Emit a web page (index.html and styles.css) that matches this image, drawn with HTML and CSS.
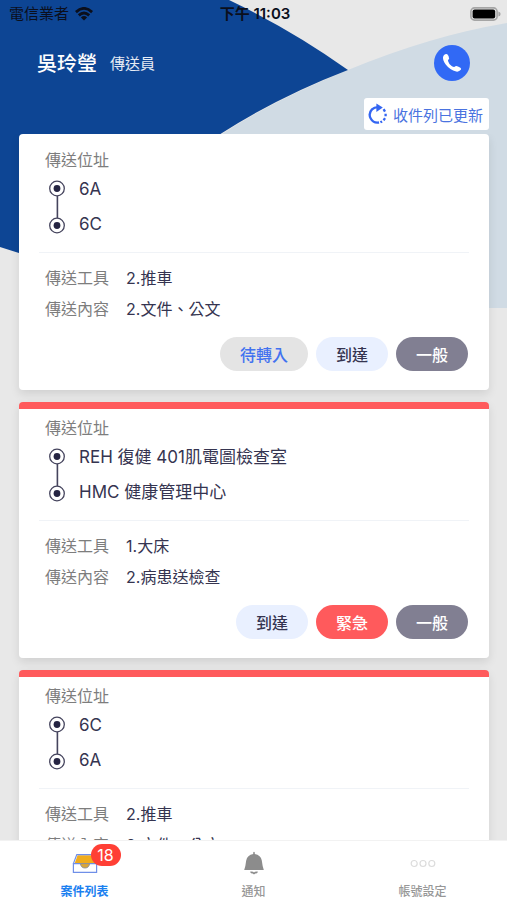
FILE: index.html
```html
<!DOCTYPE html>
<html lang="zh-Hant">
<head>
<meta charset="utf-8">
<meta name="viewport" content="width=device-width, initial-scale=1">
<title>案件列表</title>
<link rel="stylesheet" href="styles.css">
</head>
<body>
<svg class="backdrop" viewBox="0 0 507 308" preserveAspectRatio="none" aria-hidden="true">
  <path fill="#d0dbe4" d="M507 23Q430 36 348 70Q270 102 222 134L120 308H507Z"/>
  <path fill="#0d4594" d="M0 0H229Q292 30 348 70Q280 96 222 133Q130 190 60 266L0 247Z"/>
</svg>

<div class="app">
  <div class="status">
    <div class="carrier">
      <span>電信業者</span>
      <svg width="18" height="14" viewBox="0 0 18 14" fill="none" stroke="#0b0f1c" stroke-width="2.8">
        <path d="M.9 5.1Q9-2.3 17.1 5.1M3.8 8.4Q9 3.6 14.2 8.4"/>
        <path fill="#0b0f1c" stroke="none" d="M5.9 10.4Q9 7.8 12.1 10.4L9 13.6Z"/>
      </svg>
    </div>
    <div class="time">下午 11:03</div>
    <svg class="battery" width="31" height="14" viewBox="0 0 31 14">
      <rect x=".9" y=".9" width="26.2" height="12.2" rx="3.6" fill="#e8e8e8" stroke="#a5a5a5" stroke-width="1.6"/>
      <rect x="2.6" y="2.4" width="22.6" height="9.2" rx="2" fill="#000"/>
      <path fill="#a5a5a5" d="M28.4 4.5Q30.6 5 30.6 7T28.4 9.5Z"/>
    </svg>
  </div>

  <header class="profile">
    <h1>吳玲瑩</h1>
    <span class="role">傳送員</span>
    <button class="call" type="button" aria-label="撥打電話">
      <svg width="20" height="20" viewBox="0 0 22 22" fill="#fff">
        <path d="M2.6 1.9Q4.2.6 5.8 1.5Q8.3 4 7.9 6.4Q6.7 7.5 6.5 8.5Q7.4 12 10.6 14.2Q12.1 15.3 13.4 15.4Q14.4 15.2 15.3 14.4Q16.8 14.1 20.2 16.1Q21.6 17.2 20.7 18.5Q18.7 21 15.6 20.4Q8.7 18.7 4.3 13Q.8 8.2 1.1 4.6Q1.5 2.9 2.6 1.9Z"/>
      </svg>
    </button>
  </header>

  <div class="notice-row">
    <button class="notice" type="button">
      <svg width="20" height="22" viewBox="0 0 20 22" fill="none" stroke="#3466f2" stroke-width="2.3">
        <path d="M11 19.5A7.8 7.8 0 0 1 4 6.4Q6.2 4.1 10 4.1"/>
        <path fill="#3466f2" stroke="none" d="M8.4.4L14.8 4.6L8.4 9.1Z"/>
        <path d="M15.6 6.2L17 8.6M17.6 10.8V13.2M17 15.2L15.6 17.3M14.1 18.4L12.4 19.3"/>
      </svg>
      <span>收件列已更新</span>
    </button>
  </div>

  <main class="cases">
    <article class="card">
      <h2>傳送位址</h2>
      <div class="route">
        <svg width="16" height="54" viewBox="0 0 16 54" fill="none" stroke="#45445d"><circle cx="8" cy="8.5" r="7.3" stroke-width="1.3"/><circle cx="8" cy="45.5" r="7.3" stroke-width="1.3"/><path stroke-width="1.6" d="M8.4 16V38"/><g fill="#252442" stroke="none"><circle cx="8" cy="8.5" r="3.4"/><circle cx="8" cy="45.5" r="3.4"/></g></svg>
        <ol><li>6A</li><li>6C</li></ol>
      </div>
      <dl>
        <div><dt>傳送工具</dt><dd>2.推車</dd></div>
        <div><dt>傳送內容</dt><dd>2.文件、公文</dd></div>
      </dl>
      <div class="actions">
        <button class="pill waiting" type="button">待轉入</button>
        <button class="pill arrive" type="button">到達</button>
        <button class="pill normal" type="button">一般</button>
      </div>
    </article>

    <article class="card urgent-card">
      <h2>傳送位址</h2>
      <div class="route">
        <svg width="16" height="54" viewBox="0 0 16 54" fill="none" stroke="#45445d"><circle cx="8" cy="8.5" r="7.3" stroke-width="1.3"/><circle cx="8" cy="45.5" r="7.3" stroke-width="1.3"/><path stroke-width="1.6" d="M8.4 16V38"/><g fill="#252442" stroke="none"><circle cx="8" cy="8.5" r="3.4"/><circle cx="8" cy="45.5" r="3.4"/></g></svg>
        <ol><li>REH 復健 401肌電圖檢查室</li><li>HMC 健康管理中心</li></ol>
      </div>
      <dl>
        <div><dt>傳送工具</dt><dd>1.大床</dd></div>
        <div><dt>傳送內容</dt><dd>2.病患送檢查</dd></div>
      </dl>
      <div class="actions">
        <button class="pill arrive" type="button">到達</button>
        <button class="pill urgent" type="button">緊急</button>
        <button class="pill normal" type="button">一般</button>
      </div>
    </article>

    <article class="card urgent-card">
      <h2>傳送位址</h2>
      <div class="route">
        <svg width="16" height="54" viewBox="0 0 16 54" fill="none" stroke="#45445d"><circle cx="8" cy="8.5" r="7.3" stroke-width="1.3"/><circle cx="8" cy="45.5" r="7.3" stroke-width="1.3"/><path stroke-width="1.6" d="M8.4 16V38"/><g fill="#252442" stroke="none"><circle cx="8" cy="8.5" r="3.4"/><circle cx="8" cy="45.5" r="3.4"/></g></svg>
        <ol><li>6C</li><li>6A</li></ol>
      </div>
      <dl>
        <div><dt>傳送工具</dt><dd>2.推車</dd></div>
        <div><dt>傳送內容</dt><dd>2.文件、公文</dd></div>
      </dl>
    </article>
  </main>

  <nav class="tabs">
    <a class="tab active" href="#cases">
      <span class="icon">
        <svg width="26" height="26" viewBox="0 0 26 26">
          <path fill="#f0ac1c" d="M5.6 5.2H20.4L23.4 13.4H2.6Z"/>
          <path fill="#fff" stroke="#6f8fe8" stroke-width="1.2" d="M1.4 13.6H24.6V22.4H1.4Z"/>
          <path fill="none" stroke="#6f8fe8" stroke-width="1.2" d="M1.4 13.6L4.8 4.6H21.2L24.6 13.6"/>
          <path fill="#d9a63a" stroke="#8a8f9c" stroke-width=".9" d="M8.4 13.6H17.6Q17 18 13 18T8.4 13.6Z"/>
        </svg>
        <span class="badge">18</span>
      </span>
      <span>案件列表</span>
    </a>
    <a class="tab" href="#notifications">
      <span class="icon">
        <svg width="26" height="26" viewBox="0 0 26 26" fill="#8c8c8c">
          <path d="M12.2 2.4Q13 1.2 13.8 2.4V4Q19.8 5 20.8 10.5Q21.4 16 22.8 20H3.2Q4.6 16 5.2 10.5Q6.2 5 12.2 4Z"/>
          <path fill="none" stroke="#8c8c8c" stroke-width="1.5" d="M9.8 21.5Q10.4 23.2 11.7 22.4L13 23.6L14.3 22.4Q15.6 23.2 16.2 21.5"/>
        </svg>
      </span>
      <span>通知</span>
    </a>
    <a class="tab" href="#settings">
      <span class="icon">
        <svg width="26" height="26" viewBox="0 0 26 26" fill="none" stroke="#dcdcdc" stroke-width="1.2"><circle cx="4.2" cy="13.5" r="3"/><circle cx="13" cy="13.5" r="3"/><circle cx="21.8" cy="13.5" r="3"/></svg>
      </span>
      <span>帳號設定</span>
    </a>
  </nav>
</div>
</body>
</html>
```
FILE: styles.css
```css
* { box-sizing: border-box; }

body {
  margin: 0;
  background: #e8e8e8;
  color: #353450;
  font-family: Inter, "Noto Sans CJK TC", sans-serif;
  font-size: 16px;
}

button {
  border: 0;
  padding: 0;
  font: inherit;
  cursor: pointer;
}

svg { display: block; flex: none; }

h1, h2, ol, dl, dd { margin: 0; padding: 0; font-weight: 400; }

.backdrop {
  position: absolute;
  top: 0;
  left: 0;
  width: 100%;
  height: 308px;
}

.app {
  position: relative;
  display: flex;
  flex-direction: column;
  height: 100vh;
}

.status {
  display: grid;
  grid-template-columns: 1fr auto 1fr;
  align-items: center;
  height: 27px;
  padding: 0 6px 0 9px;
  color: #0b0f1c;
  font-size: 15px;
  line-height: 20px;
}

.carrier { display: flex; align-items: center; gap: 6px; }
.time { font-weight: 600; }
.battery { justify-self: end; }

.profile {
  display: flex;
  align-items: center;
  height: 71px;
  padding: 0 37px;
  color: #fff;
}

.profile h1 { font-size: 20px; font-weight: 500; }
.role { margin-left: 13px; font-size: 15px; color: #e6ecf5; }

.call {
  display: grid;
  place-items: center;
  width: 36px;
  height: 36px;
  margin-left: auto;
  border-radius: 50%;
  background: #3169f5;
}

.notice-row {
  display: flex;
  justify-content: flex-end;
  padding: 0 18px 4px;
}

.notice {
  display: flex;
  align-items: center;
  gap: 5px;
  height: 32px;
  padding: 0 6px 0 4px;
  border-radius: 3px;
  background: #fff;
  color: #4a73e0;
  font-size: 15px;
}

.cases {
  display: flex;
  flex: 1;
  flex-direction: column;
  gap: 12px;
  min-height: 0;
  padding: 0 18px 12px 19px;
  overflow-y: auto;
  scrollbar-width: none;
}

.card {
  flex: none;
  padding: 14px 20px 19px;
  border-radius: 4px;
  background: #fff;
  box-shadow: 0 4px 10px rgba(0, 0, 0, 0.1);
}

.urgent-card {
  background: linear-gradient(#ff5a5c 7px, #fff 7px);
}

.card h2 {
  padding-left: 6px;
  color: #7d7d7d;
  font-size: 16px;
  line-height: 24px;
}

.route {
  display: flex;
  align-items: center;
  gap: 14px;
  padding: 0 10px 10px;
  border-bottom: 1px solid #f0f3f7;
}

.route ol {
  list-style: none;
  font-size: 17px;
  line-height: 35px;
}

.card dl {
  padding: 10px 6px 12px;
  line-height: 31px;
}

.card dl div { display: flex; gap: 17px; }
.card dt { color: #7d7d7d; }

.actions {
  display: flex;
  justify-content: flex-end;
  gap: 8px;
  padding-right: 1px;
}

.pill {
  height: 34px;
  padding: 0 20px;
  border-radius: 17px;
  font-weight: 500;
}

.waiting { background: #e4e4e4; color: #4272f0; }
.arrive { background: #e9f0ff; color: #353450; }
.urgent { background: #ff5a5c; color: #fff; }
.normal { background: #817f92; color: #fff; }

.tabs {
  display: grid;
  grid-template-columns: repeat(3, 1fr);
  flex: none;
  height: 60px;
  border-top: 1px solid #f2f2f2;
  background: #fff;
}

.tab {
  display: flex;
  flex-direction: column;
  align-items: center;
  gap: 7px;
  padding-top: 9px;
  color: #979797;
  font-size: 12px;
  font-weight: 500;
  line-height: 18px;
  text-decoration: none;
}

.active { color: #1a80f0; font-weight: 700; }

.icon { position: relative; }

.badge {
  position: absolute;
  top: -6px;
  left: 19px;
  min-width: 30px;
  height: 22px;
  border-radius: 11px;
  background: #ff3f35;
  color: #fff;
  font-size: 16px;
  font-weight: 400;
  line-height: 22px;
  text-align: center;
}
```
